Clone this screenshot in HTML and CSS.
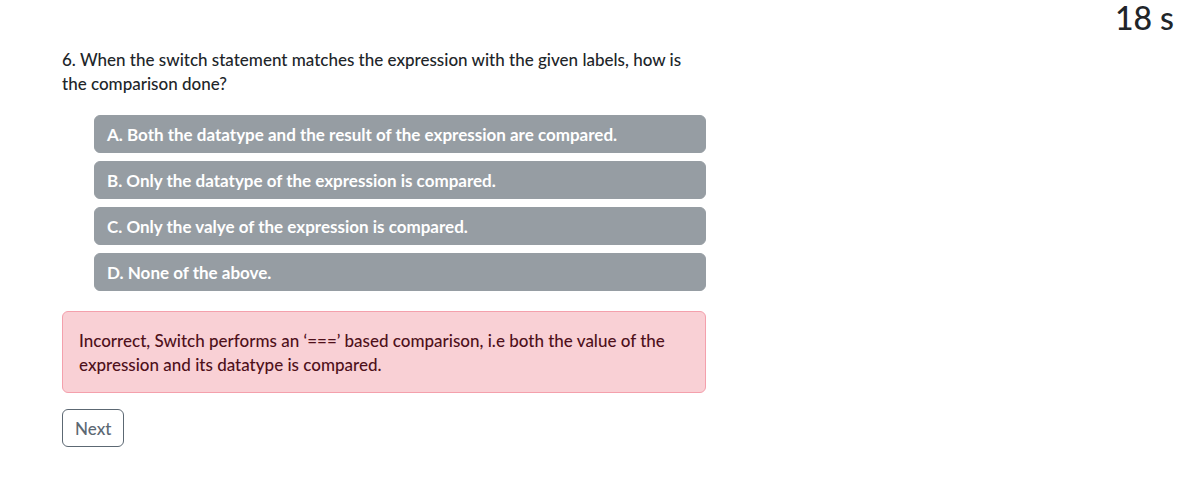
FILE: index.html
```html
<!DOCTYPE html>
<html lang="en">
<head>
<meta charset="utf-8">
<meta name="viewport" content="width=device-width, initial-scale=1">
<title>Quiz</title>
<link rel="stylesheet" href="styles.css">
</head>
<body>
<div class="timer">18 s</div>
<main class="quiz">
<p class="question">6. When the switch statement matches the expression with the given labels, how is the comparison done?</p>
<div class="options">
<button class="option" type="button" disabled>A. Both the datatype and the result of the expression are compared.</button>
<button class="option" type="button" disabled>B. Only the datatype of the expression is compared.</button>
<button class="option" type="button" disabled>C. Only the valye of the expression is compared.</button>
<button class="option" type="button" disabled>D. None of the above.</button>
</div>
<div class="alert" role="alert">Incorrect, Switch performs an ‘===’ based comparison, i.e both the value of the expression and its datatype is compared.</div>
<button class="next" type="button">Next</button>
</main>
</body>
</html>
```

FILE: styles.css
```css
* {
  box-sizing: border-box;
}

body {
  margin: 0;
  background: #fff;
  color: #212529;
  font-family: Lato, "Open Sans", sans-serif;
  font-size: 17px;
  font-weight: 500;
  line-height: 24px;
}

.timer {
  padding-right: 4px;
  font-size: 32px;
  line-height: 36px;
  text-align: right;
}

.quiz {
  max-width: 706px;
  padding: 12px 0 32px 62px;
}

.question {
  margin: 0 0 19px;
}

.options {
  display: flex;
  flex-direction: column;
  gap: 8px;
  margin-bottom: 20px;
  padding-left: 32px;
}

.option,
.next {
  padding: 7px 12px 5px;
  border: 1px solid #969da3;
  border-radius: 6px;
  font: inherit;
  text-align: left;
}

.option {
  background: #969da3;
  color: #fff;
  font-weight: 700;
}

.alert {
  margin-bottom: 16px;
  padding: 17px 16px 15px;
  border: 1px solid #f4a0ac;
  border-radius: 6px;
  background: #f9d0d5;
  color: #4f101b;
}

.next {
  border-color: #5c6873;
  background: transparent;
  color: #5c6873;
}
```
